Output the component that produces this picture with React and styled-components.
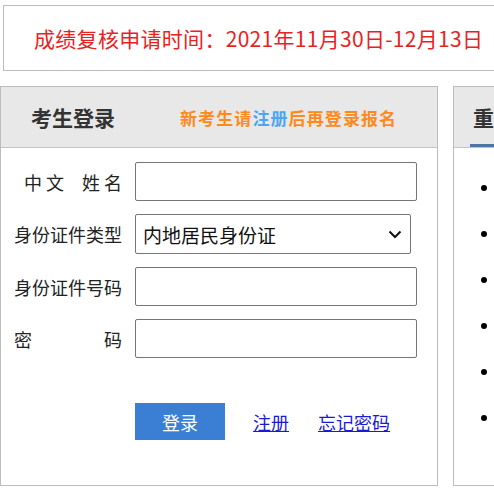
import React from 'react';
import styled, { createGlobalStyle } from 'styled-components';

const GlobalStyle = createGlobalStyle`
  html, body {
    margin: 0;
    padding: 0;
    overflow: hidden;
    background: #fff;
    font-family: "Microsoft YaHei", "Noto Sans CJK SC", sans-serif;
  }
`;

const Page = styled.div`
  width: 560px;
  padding-top: 5px;
`;

const Notice = styled.div`
  margin-left: 3px;
  height: 64px;
  border: 1px solid #bdbdbd;
  display: flex;
  align-items: center;
  padding-left: 30px;
  color: #e8231f;
  font-size: 21px;
  letter-spacing: 0.3px;
  white-space: nowrap;
`;

const Columns = styled.div`
  display: flex;
  gap: 15px;
  margin-top: 15px;
`;

const Panel = styled.div`
  width: ${(p) => p.$width}px;
  height: 400px;
  border: 1px solid #bdbdbd;
  box-sizing: border-box;
  flex-shrink: 0;
`;

const PanelHead = styled.div`
  height: 61px;
  background: #e8e8e8;
  border-bottom: 1px solid #c4c4c4;
  display: flex;
  align-items: center;
  padding-left: ${(p) => p.$pad}px;
  box-sizing: border-box;
`;

const HeadTitle = styled.div`
  font-size: 21px;
  font-weight: bold;
  color: #333;
  position: relative;
  height: 100%;
  display: flex;
  align-items: center;
`;

const TabLine = styled.div`
  position: absolute;
  left: -3px;
  right: -40px;
  bottom: 0;
  height: 3px;
  background: #4f74a8;
`;

const Tip = styled.div`
  margin-left: 65px;
  font-size: 17px;
  font-weight: bold;
  color: #ff8a1c;
  letter-spacing: 1.1px;
`;

const TipLink = styled.span`
  color: #4ba6f3;
`;

const Form = styled.div`
  padding: 14px 0 0 13px;
  display: flex;
  flex-direction: column;
  gap: 13px;
`;

const Row = styled.div`
  display: flex;
  align-items: center;
  gap: 13px;
`;

const Label = styled.div`
  width: 108px;
  font-size: 18px;
  color: #222;
  text-align: ${(p) => (p.$justify ? 'justify' : 'right')};
  text-align-last: ${(p) => (p.$justify ? 'justify' : 'auto')};
  white-space: pre;
`;

const Input = styled.input`
  width: 282px;
  height: 39px;
  box-sizing: border-box;
  border: 1px solid #767676;
  border-radius: 2px;
  font-size: 18px;
  padding: 0 6px;
  outline: none;
`;

const SelectBox = styled.div`
  width: 276px;
  height: 40px;
  box-sizing: border-box;
  border: 1px solid #767676;
  border-radius: 2px;
  display: flex;
  align-items: center;
  justify-content: space-between;
  padding: 0 8px 0 7px;
  font-size: 19px;
  color: #111;
`;

const Actions = styled.div`
  display: flex;
  align-items: center;
  margin: 45px 0 0 134px;
`;

const Button = styled.button`
  width: 90px;
  height: 37px;
  border: none;
  background: #3a7fd4;
  color: #fff;
  font-size: 18px;
  font-family: inherit;
  margin-right: 28px;
`;

const Link = styled.a`
  font-size: 18px;
  color: #1a1ad6;
  text-decoration: underline;
  margin-right: 29px;
`;

const List = styled.ul`
  list-style: none;
  margin: 0;
  padding: 37px 0 0 27px;
  display: flex;
  flex-direction: column;
  gap: 40px;
`;

const Dot = styled.li`
  width: 6px;
  height: 6px;
  border-radius: 50%;
  background: #000;
`;

export default function App() {
  return (
    <>
      <GlobalStyle />
      <Page>
        <Notice>成绩复核申请时间：2021年11月30日-12月13日</Notice>
        <Columns>
          <Panel $width={438}>
            <PanelHead $pad={30}>
              <HeadTitle>考生登录</HeadTitle>
              <Tip>
                新考生请<TipLink>注册</TipLink>后再登录报名
              </Tip>
            </PanelHead>
            <Form>
              <Row>
                <Label>{'中 文\u3000姓 名'}</Label>
                <Input />
              </Row>
              <Row>
                <Label>身份证件类型</Label>
                <SelectBox>
                  <span>内地居民身份证</span>
                  <svg width="14" height="9" viewBox="0 0 14 9">
                    <path d="M1.5 1.5 L7 7 L12.5 1.5" fill="none" stroke="#111" strokeWidth="2" />
                  </svg>
                </SelectBox>
              </Row>
              <Row>
                <Label>身份证件号码</Label>
                <Input />
              </Row>
              <Row>
                <Label $justify>密 码</Label>
                <Input type="password" />
              </Row>
            </Form>
            <Actions>
              <Button>登录</Button>
              <Link href="#">注册</Link>
              <Link href="#">忘记密码</Link>
            </Actions>
          </Panel>
          <Panel $width={200}>
            <PanelHead $pad={19}>
              <HeadTitle>
                重要通知
                <TabLine />
              </HeadTitle>
            </PanelHead>
            <List>
              <Dot />
              <Dot />
              <Dot />
              <Dot />
              <Dot />
              <Dot />
            </List>
          </Panel>
        </Columns>
      </Page>
    </>
  );
}
